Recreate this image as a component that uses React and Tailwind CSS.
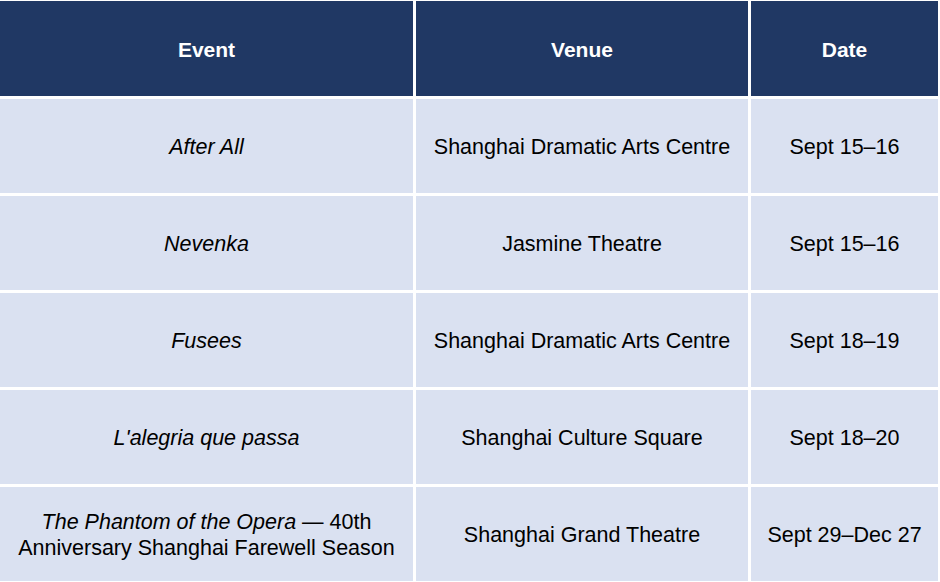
export default function App() {
  const rows = [
    { event: <em>After All</em>, venue: "Shanghai Dramatic Arts Centre", date: "Sept 15–16" },
    { event: <em>Nevenka</em>, venue: "Jasmine Theatre", date: "Sept 15–16" },
    { event: <em>Fusees</em>, venue: "Shanghai Dramatic Arts Centre", date: "Sept 18–19" },
    { event: <em>L'alegria que passa</em>, venue: "Shanghai Culture Square", date: "Sept 18–20" },
    {
      event: (
        <>
          <em>The Phantom of the Opera</em> — 40th
          <br />
          Anniversary Shanghai Farewell Season
        </>
      ),
      venue: "Shanghai Grand Theatre",
      date: "Sept 29–Dec 27",
    },
  ];

  return (
    <div
      className="w-[940px] h-[582px] bg-white overflow-hidden pt-[1px]"
      style={{ fontFamily: '"Liberation Sans", Arial, sans-serif' }}
    >
      <div className="grid grid-cols-[413px_332px_187px] grid-rows-[95px_repeat(5,94px)] gap-[3px] text-[21.5px] leading-[26px] text-black">
        <div className="bg-[#203864] text-white font-bold flex items-center justify-center pt-[2px] text-[21px]">Event</div>
        <div className="bg-[#203864] text-white font-bold flex items-center justify-center pt-[2px] text-[21px]">Venue</div>
        <div className="bg-[#203864] text-white font-bold flex items-center justify-center pt-[2px] text-[21px]">Date</div>
        {rows.map((r, i) => (
          <div key={i} className="contents">
            <div className="bg-[#dae1f1] flex items-center justify-center text-center pt-[2px]">
              <span>{r.event}</span>
            </div>
            <div className="bg-[#dae1f1] flex items-center justify-center text-center pt-[2px]">{r.venue}</div>
            <div className="bg-[#dae1f1] flex items-center justify-center text-center pt-[2px]">{r.date}</div>
          </div>
        ))}
      </div>
    </div>
  );
}
